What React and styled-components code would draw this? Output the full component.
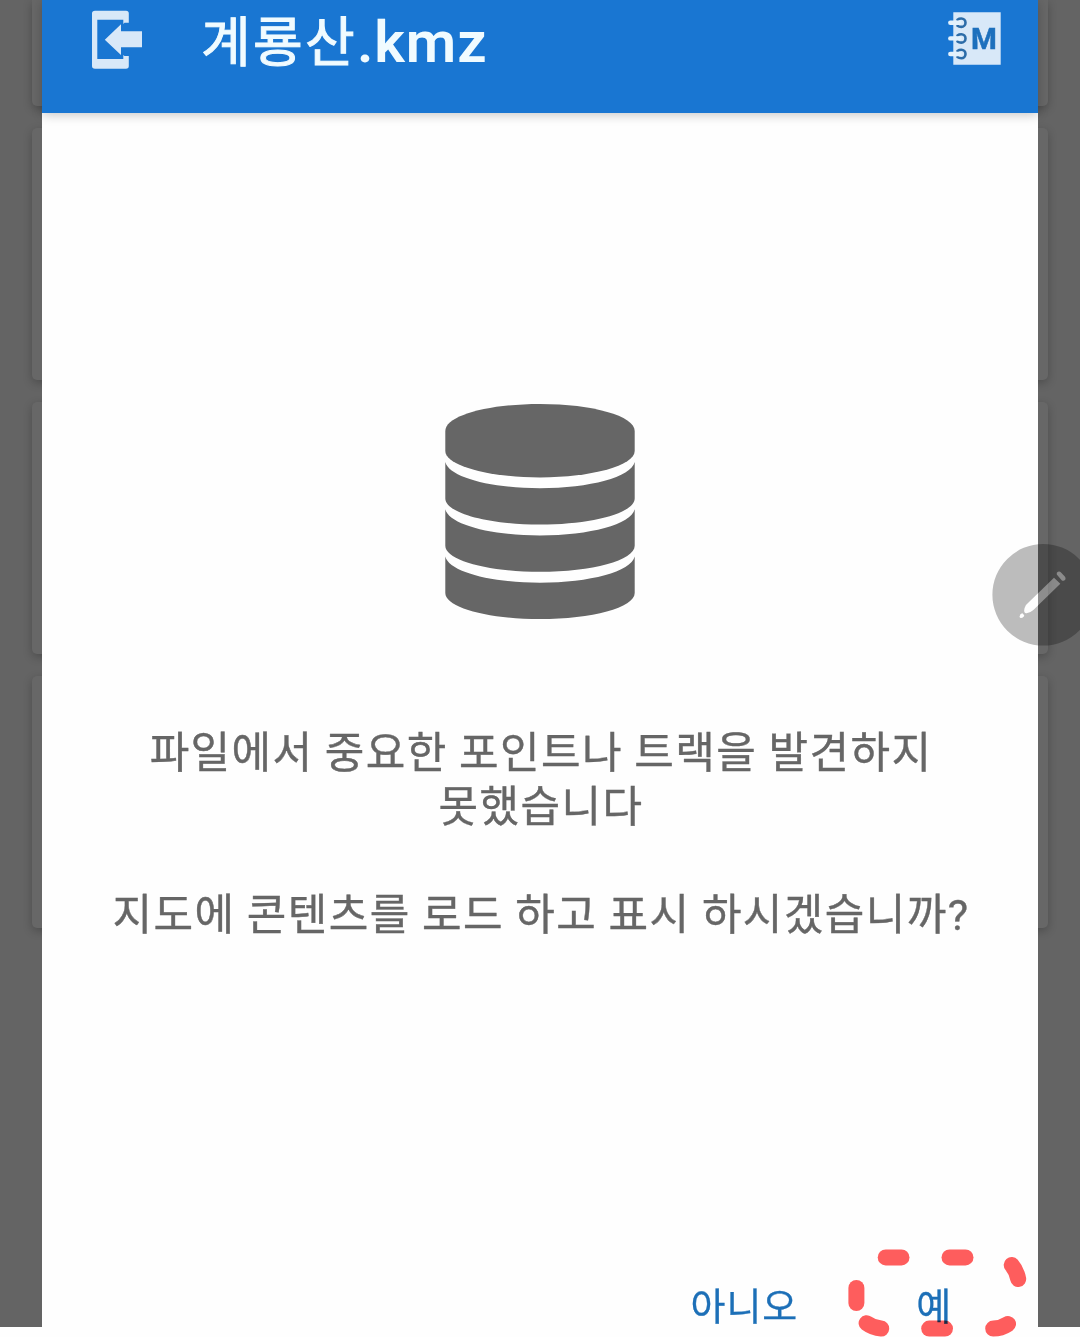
import React from 'react'
import styled, { createGlobalStyle } from 'styled-components'

const colors = {
  primary: '#1976d2',
  link: '#1c6fb7',
  scrim: '#646464',
  card: '#676767',
  text: '#666666',
  icon: '#d8e8f8',
  marker: '#ff5d5d',
}

const GlobalStyle = createGlobalStyle`
  body {
    margin: 0;
    background: #fefefe;
    font-family: Roboto, 'Noto Sans CJK KR', sans-serif;
  }
`

const Screen = styled.main`
  position: relative;
  width: 1080px;
  height: 1337px;
  overflow: hidden;
  background: #fefefe;
`

const CardList = styled.div`
  box-sizing: border-box;
  display: flex;
  flex-direction: column;
  gap: 22px;
  height: 1327px;
  padding: 0 32px;
  background: ${colors.scrim};
`

const Card = styled.div`
  height: ${props => (props.$first ? 106 : 252)}px;
  border-radius: ${props => (props.$first ? '0 0 5px 5px' : '5px')};
  background: ${colors.card};
  box-shadow: 0 3px 10px rgba(0, 0, 0, 0.24);
`

// sits on top of the card list
const Dialog = styled.section`
  position: absolute;
  top: 0;
  left: 42px;
  right: 42px;
  bottom: 0;
  display: flex;
  flex-direction: column;
  background: #fefefe;
`

const Toolbar = styled.header`
  box-sizing: border-box;
  display: flex;
  align-items: flex-start;
  height: 113px;
  padding: 10px 37px 0 50px;
  background: ${colors.primary};
  box-shadow: 0 2px 10px rgba(0, 0, 0, 0.22);
  svg {
    flex: none;
  }
`

const Title = styled.h1`
  flex: 1;
  display: flex;
  align-items: flex-start;
  margin: 0 0 0 58px;
  color: #f0fbff;
  font-size: 54px;
  font-weight: 400;
  line-height: 64px;
  white-space: nowrap;
`

const FileName = styled.span`
  margin-top: 2px;
  letter-spacing: 2.3px;
  -webkit-text-stroke: 1px #f0fbff;
`

const Extension = styled.span`
  font-size: 58px;
  font-weight: 600;
  letter-spacing: 0.9px;
`

const Content = styled.div`
  flex: 1;
  display: flex;
  flex-direction: column;
  align-items: center;
  padding-top: 291px;
`

const Message = styled.p`
  margin: ${props => props.$top}px 0 0;
  padding-left: 2px;
  color: ${colors.text};
  font-size: 43px;
  line-height: 54px;
  letter-spacing: 1.4px;
  word-spacing: -0.7px;
  text-align: center;
  white-space: nowrap;
  -webkit-text-stroke: 0.4px ${colors.text};
`

const Actions = styled.footer`
  display: flex;
  justify-content: flex-end;
  gap: 118px;
  height: 59px;
  padding-right: 86px;
`

const TextButton = styled.button`
  padding: 0;
  border: 0;
  background: none;
  color: ${colors.link};
  font: inherit;
  font-size: 38px;
  line-height: 58px;
  letter-spacing: 0.9px;
  height: 58px;
  cursor: pointer;
  -webkit-text-stroke: 0.3px ${colors.link};
`

const PenButton = styled.svg`
  position: absolute;
  left: 992px;
  top: 543px;
`

const Highlight = styled.svg`
  position: absolute;
  left: 840px;
  top: 1240px;
  mix-blend-mode: multiply;
`

const ImportIcon = () => (
  <svg width="51" height="60" viewBox="92 10 51 60" fill={colors.icon}>
    <path d="M95 10.7H126Q128.8 10.7 128.8 13.5V22.7H124.5L123.3 24V19.7H97.3V59H123.3V55L124.5 56H128.8V66Q128.8 68.7 126 68.7H95Q92 68.7 92 66V13.5Q92 10.7 95 10.7Z" />
    <path d="M104.8 39.7L121 24.3V31.3H142V47.3H121V55Z" />
  </svg>
)

const NotebookIcon = () => (
  <svg width="54" height="56" viewBox="947 10 54 56">
    <path d="M953.3 12.3H1000.7V64.7H953.3Z" fill={colors.icon} />
    {[22.7, 38.4, 54].map(y => (
      <g key={y} fill="none" strokeLinecap="round">
        <path d={`M957.5 ${y - 3}Q959 ${y - 4.2} 961.3 ${y - 4.2}A4.2 4.2 0 0 1 961.3 ${y + 4.2}Q959 ${y + 4.2} 957.5 ${y + 3}`} stroke="#2c6ca8" strokeWidth="2.6" />
        <path d={`M950.3 ${y}H959.5`} stroke="#e3f1fc" strokeWidth="4.4" />
      </g>
    ))}
    <text x="983.9" y="49.2" textAnchor="middle" fontFamily="Roboto, sans-serif" fontSize="29.5" fontWeight="700" fill="#1d70bd" stroke="#1d70bd" strokeWidth="0.5">M</text>
  </svg>
)

const DatabaseIcon = () => (
  <svg width="190" height="216" viewBox="445 404 190 216" fill={colors.text}>
    <path d="M445.3 431C445.3 416 487 404 540 404S634.7 416 634.7 431V451C634.7 465.5 592 477.4 540 477.4S445.3 465.5 445.3 451Z" />
    {[0, 47.2, 94.5].map(dy => (
      <path
        key={dy}
        transform={`translate(0 ${dy})`}
        d="M445.3 462C449 477 490 488.2 540 488.2S631 477 634.7 462V498.5C634.7 513 592 524.6 540 524.6S445.3 513 445.3 498.5Z"
      />
    ))}
  </svg>
)

// the pen is cut out of the disc and then tinted, so it stays visible on dark
const penBody = 'M1026 605L1054 577.7L1060.3 583.7L1033.3 610Q1029 613.8 1025 613Q1023 610.5 1026 605Z'
const penCap = 'M1056.8 574.6Q1056.3 572.5 1058 571.8Q1059.6 571 1061 572.5L1065 576.7Q1066 578.2 1065.2 579.8Q1063.7 581.5 1061.9 580.4Z'
const penNib = 'M1019.6 616.4Q1020 613.8 1022.3 613.3L1024.2 615.2Q1024 617.5 1020.8 618Q1019.5 618 1019.6 616.4Z'

const FloatingPen = () => (
  <PenButton width="88" height="104" viewBox="992 543 88 104">
    <path
      fillRule="evenodd"
      fill="#000"
      fillOpacity="0.26"
      d={`M992.4 594.8A50.8 50.8 0 1 1 1094 594.8A50.8 50.8 0 1 1 992.4 594.8Z${penBody}${penCap}${penNib}`}
    />
    <path fill="#fff" fillOpacity="0.25" d={penBody + penCap + penNib} />
  </PenButton>
)

const DashedHighlight = () => (
  <Highlight width="200" height="97" viewBox="840 1240 200 97" fill="none" stroke={colors.marker} strokeWidth="16" strokeLinecap="round">
    <path d="M885.7 1257.4H901.5" />
    <path d="M949.5 1257.4H965.5" />
    <path d="M1011.7 1265Q1016.5 1270.5 1018.2 1279" />
    <path d="M856.4 1288V1303" />
    <path d="M866.6 1323.2Q873 1328 881.2 1328.6" />
    <path d="M929.2 1328.6H945" />
    <path d="M993.2 1328.6Q1001 1328.6 1008 1324" />
  </Highlight>
)

const App = () => {
  return (
    <Screen>
      <GlobalStyle />
      <CardList>
        <Card $first />
        <Card />
        <Card />
        <Card />
      </CardList>
      <Dialog>
        <Toolbar>
          <ImportIcon />
          <Title>
            <FileName>계룡산</FileName>
            <Extension>.kmz</Extension>
          </Title>
          <NotebookIcon />
        </Toolbar>
        <Content>
          <DatabaseIcon />
          <Message $top={106}>
            파일에서 중요한 포인트나 트랙을 발견하지
            <br />
            못했습니다
          </Message>
          <Message $top={54}>지도에 콘텐츠를 로드 하고 표시 하시겠습니까?</Message>
        </Content>
        <Actions>
          <TextButton>아니오</TextButton>
          <TextButton>예</TextButton>
        </Actions>
      </Dialog>
      <FloatingPen />
      <DashedHighlight />
    </Screen>
  )
}

export default App
